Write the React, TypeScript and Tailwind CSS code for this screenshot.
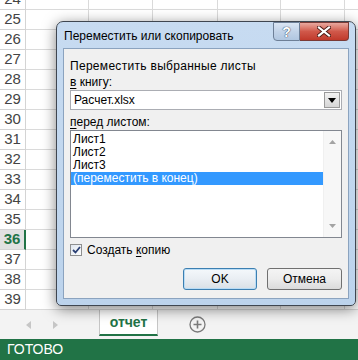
import React from "react"

const ROWS = [24, 25, 26, 27, 28, 29, 30, 31, 32, 33, 34, 35, 36, 37, 38, 39]
const COLS = [63, 64, 65, 63, 64, 64]

const ui = { fontFamily: '"Liberation Sans", Arial, sans-serif' }

function GridRow({ n }: { n: number }) {
  const active = n === 36
  return (
    <div className="flex h-[20px] shrink-0">
      <div
        className={
          active
            ? "flex w-[26px] shrink-0 items-center justify-center border-b border-r-2 border-b-[#d4d4d4] border-r-[#217346] bg-[#e1e1e1] text-[15px] font-bold text-[#217346]"
            : "flex w-[26px] shrink-0 items-center justify-center border-b border-r border-[#d4d4d4] text-[15px] text-[#444]"
        }
      >
        {n}
      </div>
      {COLS.map((w, i) => (
        <div key={i} className="shrink-0 border-b border-r border-[#dadada] bg-white" style={{ width: w }} />
      ))}
    </div>
  )
}

function Underlined({ ch }: { ch: string }) {
  return <span className="underline underline-offset-2">{ch}</span>
}

function HelpButton() {
  return (
    <div className="flex h-[19px] w-[27px] items-center justify-center rounded-bl-[4px] border border-[#6d7f97] bg-gradient-to-b from-[#dbe6f4] via-[#c2d3e8] to-[#b0c6e0]">
      <span className="text-[14px] font-bold leading-none text-white [text-shadow:0_0_1px_#2b3b55,0_0_1px_#2b3b55]">?</span>
    </div>
  )
}

function CloseButton() {
  return (
    <div className="flex h-[19px] w-[49px] items-center justify-center rounded-br-[4px] border border-l-0 border-[#7a3a36] bg-gradient-to-b from-[#e8a89f] via-[#d0584a] to-[#c0392b]">
      <svg width="14" height="11" viewBox="0 0 14 11">
        <path d="M2 1.5 L12 9.5 M12 1.5 L2 9.5" stroke="#4a1a14" strokeWidth="4" strokeLinecap="square" />
        <path d="M2 1.5 L12 9.5 M12 1.5 L2 9.5" stroke="#fff" strokeWidth="2.2" strokeLinecap="square" />
      </svg>
    </div>
  )
}

function Dialog() {
  return (
    <div
      className="absolute left-[56px] top-[21px] flex h-[285px] w-[300px] flex-col rounded-t-[7px] rounded-b-[5px] border border-[#3f4650] bg-gradient-to-b from-[#c7dbf1] to-[#bcd3ec] px-[6px] pb-[6px] shadow-[0_3px_14px_rgba(0,0,0,0.5)]"
      style={ui}
    >
      <div className="flex h-[26px] shrink-0 items-start">
        <div className="pt-[8px] pl-[1px] text-[12px] leading-none text-black">Переместить или скопировать</div>
        <div className="ml-auto flex">
          <HelpButton />
          <CloseButton />
        </div>
      </div>
      <div className="flex flex-1 flex-col border border-[#8ba3bf] bg-[#f0f0f0] px-[6px] pt-[9px] text-[12px] text-black">
        <div className="h-[16px] leading-[16px] tracking-[0.3px]">Переместить выбранные листы</div>
        <div className="h-[16px] leading-[16px]">
          <Underlined ch="в" /> книгу:
        </div>
        <div className="flex h-[20px] items-center border border-[#abadb3] bg-white pl-[3px]">
          <span>Расчет.xlsx</span>
          <div className="ml-auto mr-[1px] flex h-[16px] w-[16px] items-center justify-center border border-[#9a9a9a] bg-gradient-to-b from-[#f2f2f2] to-[#d6d6d6]">
            <svg width="8" height="5" viewBox="0 0 8 5">
              <path d="M0 0 L8 0 L4 5 Z" fill="#000" />
            </svg>
          </div>
        </div>
        <div className="mt-[4px] h-[16px] leading-[16px]">
          <Underlined ch="п" />еред листом:
        </div>
        <div className="flex h-[108px] border border-[#828790] bg-white">
          <div className="flex-1 pt-[2px]">
            {["Лист1", "Лист2", "Лист3"].map((s) => (
              <div key={s} className="h-[13px] pl-[2px] leading-[13px]">
                {s}
              </div>
            ))}
            <div className="h-[13px] bg-[#3399ff] pl-[2px] leading-[13px] text-white">(переместить в конец)</div>
          </div>
          <div className="flex w-[18px] flex-col items-center justify-between border-l border-[#f0f0f0] bg-[#f7f7f7] py-[9px]">
            <svg width="7" height="4" viewBox="0 0 7 4">
              <path d="M0 4 L7 4 L3.5 0 Z" fill="#a3a3a3" />
            </svg>
            <svg width="7" height="4" viewBox="0 0 7 4">
              <path d="M0 0 L7 0 L3.5 4 Z" fill="#a3a3a3" />
            </svg>
          </div>
        </div>
        <div className="mt-[5px] flex h-[14px] items-center gap-[5px]">
          <div className="flex h-[12px] w-[12px] items-center justify-center border border-[#8e8f8f] bg-gradient-to-br from-[#dfe6ef] to-[#fdfdfd]">
            <svg width="9" height="8" viewBox="0 0 9 8">
              <path d="M1 4 L3.5 6.5 L8 1" stroke="#2a3f73" strokeWidth="1.8" fill="none" />
            </svg>
          </div>
          <span>
            Создать <Underlined ch="к" />опию
          </span>
        </div>
        <div className="mt-[11px] flex justify-end gap-[10px]">
          <div className="flex h-[22px] w-[74px] items-center justify-center rounded-[3px] border border-[#3c7fb1] bg-gradient-to-b from-[#f4f8fb] via-[#e9eef3] to-[#d9e0e6] shadow-[inset_0_0_0_1px_#b9dcf5]">
            OK
          </div>
          <div className="flex h-[22px] w-[75px] items-center justify-center rounded-[3px] border border-[#707070] bg-gradient-to-b from-[#f4f4f4] via-[#ececec] to-[#dbdbdb]">
            Отмена
          </div>
        </div>
      </div>
    </div>
  )
}

export default function App() {
  return (
    <div className="relative h-[360px] w-[358px] overflow-hidden bg-white" style={{ fontFamily: '"Liberation Sans", Arial, sans-serif' }}>
      <div className="flex h-[310px] flex-col overflow-hidden">
        <div className="mt-[-10px] flex flex-col">
          {ROWS.map((n) => (
            <GridRow key={n} n={n} />
          ))}
        </div>
      </div>
      <div className="flex h-[29px] items-start bg-[#f3f3f3]">
        <div className="flex h-[29px] w-[99px] items-center gap-[22px] pl-[26px]">
          <svg width="5" height="8" viewBox="0 0 5 8">
            <path d="M5 0 L5 8 L0 4 Z" fill="#c6c6c6" />
          </svg>
          <svg width="5" height="8" viewBox="0 0 5 8">
            <path d="M0 0 L0 8 L5 4 Z" fill="#c6c6c6" />
          </svg>
        </div>
        <div className="flex h-[26px] w-[59px] items-center justify-center border-x border-[#c6c6c6] border-b-2 border-b-[#217346] bg-white text-[14px] font-bold text-[#217346]">
          отчет
        </div>
        <div className="flex h-[29px] items-center pl-[31px]">
          <svg width="17" height="17" viewBox="0 0 17 17">
            <circle cx="8.5" cy="8.5" r="7.5" fill="none" stroke="#7a7a7a" strokeWidth="1.3" />
            <path d="M8.5 4.5 V12.5 M4.5 8.5 H12.5" stroke="#7a7a7a" strokeWidth="1.6" />
          </svg>
        </div>
      </div>
      <div className="flex h-[21px] items-center bg-[#217346] pl-[7px] text-[14px] text-white">ГОТОВО</div>
      <Dialog />
    </div>
  )
}
